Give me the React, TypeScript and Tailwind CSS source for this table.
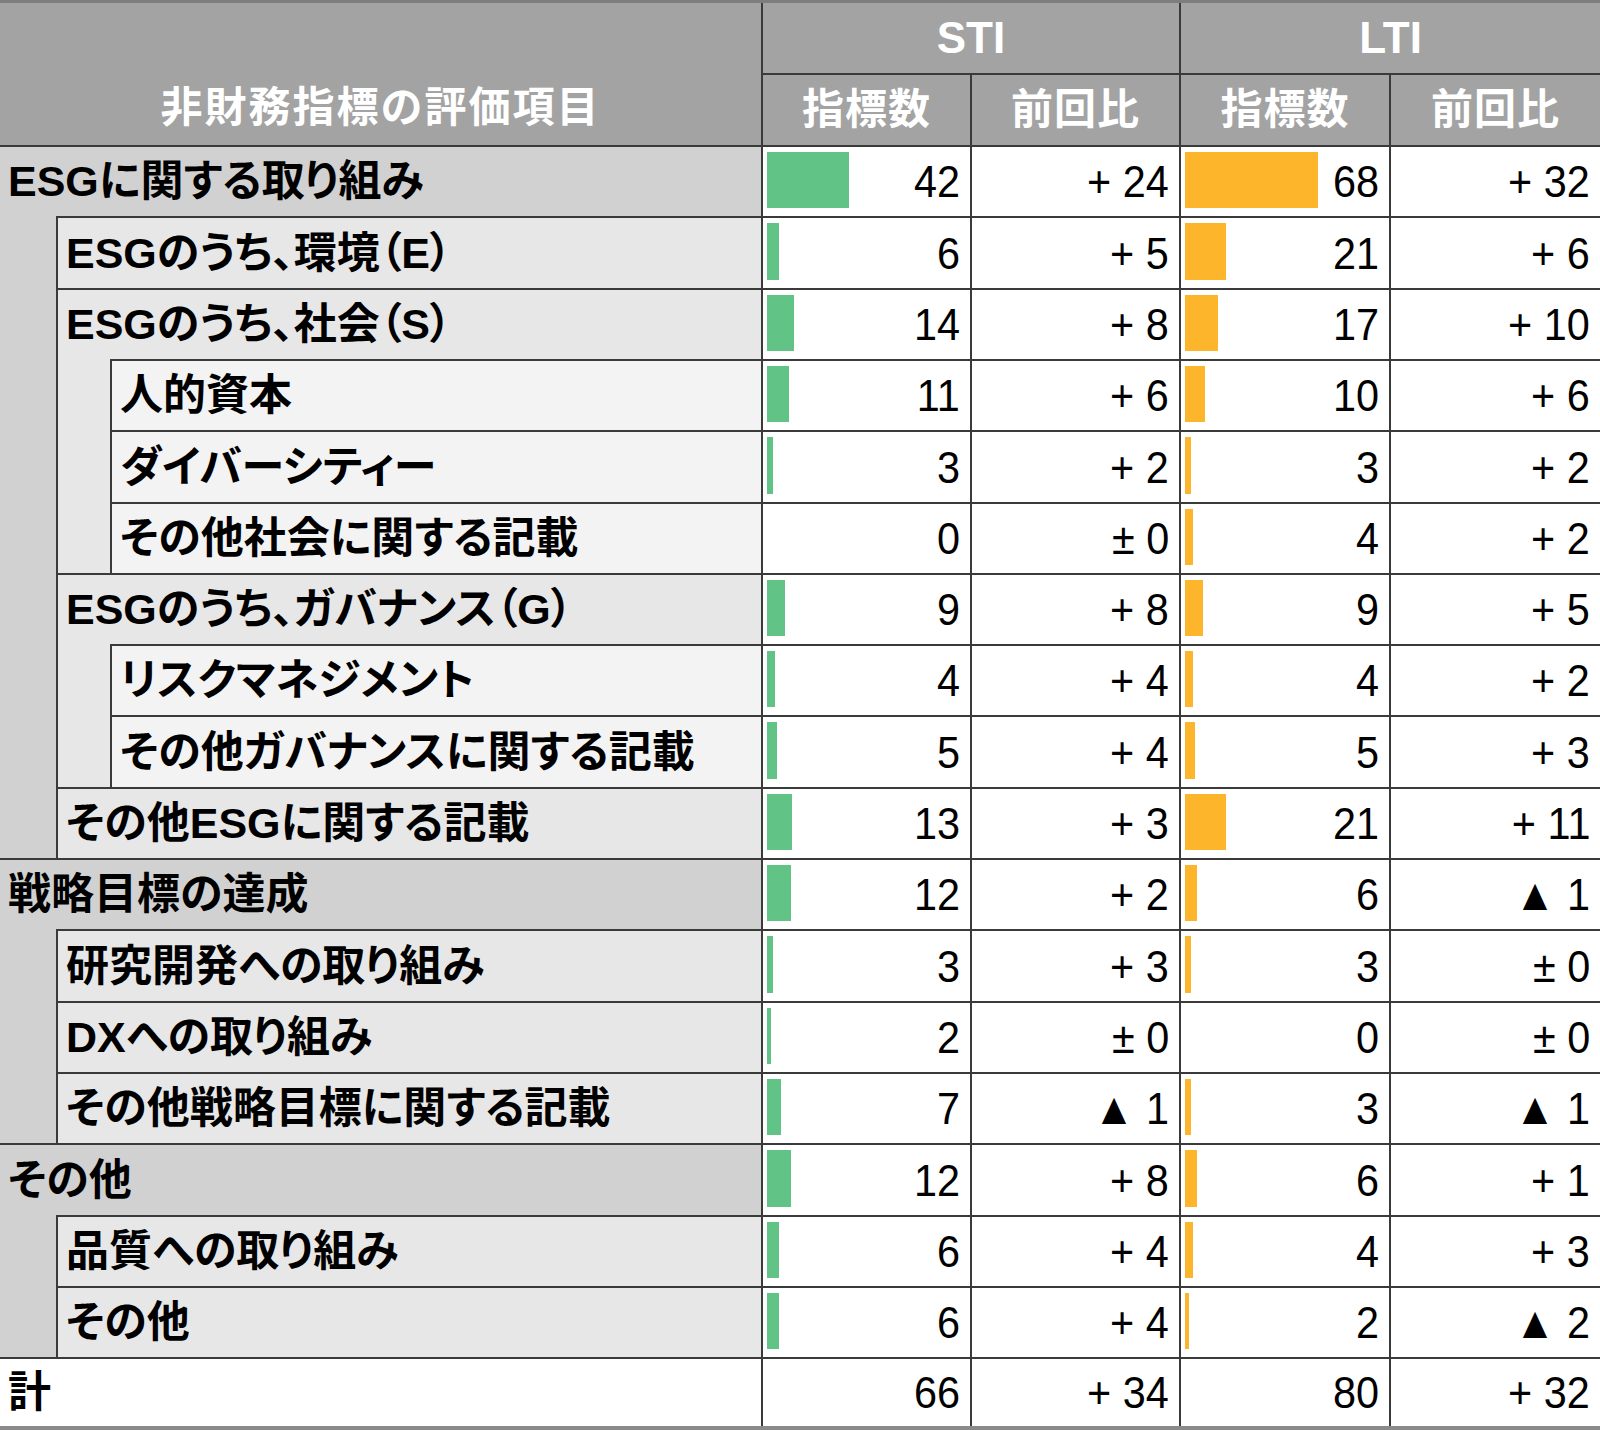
import React from "react";

type Row = {
  label: string;
  level: 1 | 2 | 3;
  s: number;
  sd: string;
  l: number;
  ld: string;
  h: string;
};

const rows: Row[] = [
  { label: "ESGに関する取り組み", level: 1, s: 42, sd: "+ 24", l: 68, ld: "+ 32", h: "h-[71px]" },
  { label: "ESGのうち、環境（E）", level: 2, s: 6, sd: "+ 5", l: 21, ld: "+ 6", h: "h-[72px]" },
  { label: "ESGのうち、社会（S）", level: 2, s: 14, sd: "+ 8", l: 17, ld: "+ 10", h: "h-[71px]" },
  { label: "人的資本", level: 3, s: 11, sd: "+ 6", l: 10, ld: "+ 6", h: "h-[71px]" },
  { label: "ダイバーシティー", level: 3, s: 3, sd: "+ 2", l: 3, ld: "+ 2", h: "h-[72px]" },
  { label: "その他社会に関する記載", level: 3, s: 0, sd: "± 0", l: 4, ld: "+ 2", h: "h-[71px]" },
  { label: "ESGのうち、ガバナンス（G）", level: 2, s: 9, sd: "+ 8", l: 9, ld: "+ 5", h: "h-[71px]" },
  { label: "リスクマネジメント", level: 3, s: 4, sd: "+ 4", l: 4, ld: "+ 2", h: "h-[71px]" },
  { label: "その他ガバナンスに関する記載", level: 3, s: 5, sd: "+ 4", l: 5, ld: "+ 3", h: "h-[72px]" },
  { label: "その他ESGに関する記載", level: 2, s: 13, sd: "+ 3", l: 21, ld: "+ 11", h: "h-[71px]" },
  { label: "戦略目標の達成", level: 1, s: 12, sd: "+ 2", l: 6, ld: "▲ 1", h: "h-[71px]" },
  { label: "研究開発への取り組み", level: 2, s: 3, sd: "+ 3", l: 3, ld: "± 0", h: "h-[72px]" },
  { label: "DXへの取り組み", level: 2, s: 2, sd: "± 0", l: 0, ld: "± 0", h: "h-[71px]" },
  { label: "その他戦略目標に関する記載", level: 2, s: 7, sd: "▲ 1", l: 3, ld: "▲ 1", h: "h-[71px]" },
  { label: "その他", level: 1, s: 12, sd: "+ 8", l: 6, ld: "+ 1", h: "h-[72px]" },
  { label: "品質への取り組み", level: 2, s: 6, sd: "+ 4", l: 4, ld: "+ 3", h: "h-[71px]" },
  { label: "その他", level: 2, s: 6, sd: "+ 4", l: 2, ld: "▲ 2", h: "h-[71px]" },
];

const FONT = "font-['Liberation_Sans','Noto_Sans_CJK_JP',sans-serif]";
const LINE = "border-[#3a3a3a]";

function Num({ text }: { text: string }) {
  return (
    <span className="inline-block origin-right scale-x-[0.92] text-[45px] leading-none text-black whitespace-pre">
      {text}
    </span>
  );
}

function BarCell({ value, color, w }: { value: number; color: string; w: string }) {
  return (
    <div className={`${w} relative flex h-full items-center justify-end border-l-2 border-t-2 ${LINE} bg-white pr-[10px]`}>
      {value > 0 && (
        <div
          className={`absolute left-[4px] top-[5px] bottom-[8px] ${color}`}
          style={{ width: Math.max(2, value * 1.96) }}
        />
      )}
      <span className="relative">
        <Num text={String(value)} />
      </span>
    </div>
  );
}

function DiffCell({ text, w }: { text: string; w: string }) {
  return (
    <div className={`${w} flex h-full items-center justify-end border-l-2 border-t-2 ${LINE} bg-white pr-[10px]`}>
      <Num text={text} />
    </div>
  );
}

function Label({ row }: { row: Row }) {
  const text = (
    <span className="pl-[8px] text-[43px] font-bold leading-none text-black whitespace-nowrap [font-feature-settings:'palt']">
      {row.label}
    </span>
  );
  if (row.level === 1) {
    return (
      <div className={`flex h-full w-[761px] items-center border-t-2 ${LINE} bg-[#d1d1d1]`}>{text}</div>
    );
  }
  if (row.level === 2) {
    return (
      <div className="flex h-full w-[761px]">
        <div className="h-full w-[56px] bg-[#d1d1d1]" />
        <div className={`flex h-full flex-1 items-center border-l-2 border-t-2 ${LINE} bg-[#e7e7e7]`}>{text}</div>
      </div>
    );
  }
  return (
    <div className="flex h-full w-[761px]">
      <div className="h-full w-[56px] bg-[#d1d1d1]" />
      <div className={`h-full w-[54px] border-l-2 ${LINE} bg-[#e7e7e7]`} />
      <div className={`flex h-full flex-1 items-center border-l-2 border-t-2 ${LINE} bg-[#f3f3f3]`}>{text}</div>
    </div>
  );
}

export default function App() {
  return (
    <div className={`${FONT} w-[1600px] h-[1430px] bg-white`}>
      <div className="border-t-[3px] border-[#7d7d7d]">
        {/* header */}
        <div className="flex h-[142px] bg-[#a3a3a3] text-white font-bold">
          <div className="flex w-[761px] items-end justify-center pb-[16px]">
            <span className="text-[42px] leading-none tracking-[2px]">非財務指標の評価項目</span>
          </div>
          <div className="flex w-[839px] flex-col">
            <div className="flex h-[70px]">
              <div className={`flex w-[418px] items-center justify-center border-l-2 ${LINE}`}>
                <span className="text-[44px] leading-none">STI</span>
              </div>
              <div className={`flex w-[421px] items-center justify-center border-l-2 ${LINE}`}>
                <span className="text-[44px] leading-none">LTI</span>
              </div>
            </div>
            <div className="flex h-[72px]">
              {["w-[209px]", "w-[209px]", "w-[210px]", "w-[211px]"].map((w, i) => (
                <div key={i} className={`flex ${w} items-center justify-center border-l-2 border-t-2 ${LINE}`}>
                  <span className="text-[42px] leading-none tracking-[1px]">{i % 2 === 0 ? "指標数" : "前回比"}</span>
                </div>
              ))}
            </div>
          </div>
        </div>
        {/* body */}
        {rows.map((r, i) => (
          <div key={i} className={`flex ${r.h}`}>
            <Label row={r} />
            <BarCell value={r.s} color="bg-[#62c386]" w="w-[209px]" />
            <DiffCell text={r.sd} w="w-[209px]" />
            <BarCell value={r.l} color="bg-[#fdb52b]" w="w-[210px]" />
            <DiffCell text={r.ld} w="w-[211px]" />
          </div>
        ))}
        {/* total */}
        <div className="flex h-[69px]">
          <div className={`flex h-full w-[761px] items-center border-t-2 ${LINE} bg-white`}>
            <span className="pl-[8px] text-[43px] font-bold leading-none text-black">計</span>
          </div>
          <DiffCell text="66" w="w-[209px]" />
          <DiffCell text="+ 34" w="w-[209px]" />
          <DiffCell text="80" w="w-[210px]" />
          <DiffCell text="+ 32" w="w-[211px]" />
        </div>
        <div className="h-[4px] bg-[#8a8a8a]" />
      </div>
    </div>
  );
}
